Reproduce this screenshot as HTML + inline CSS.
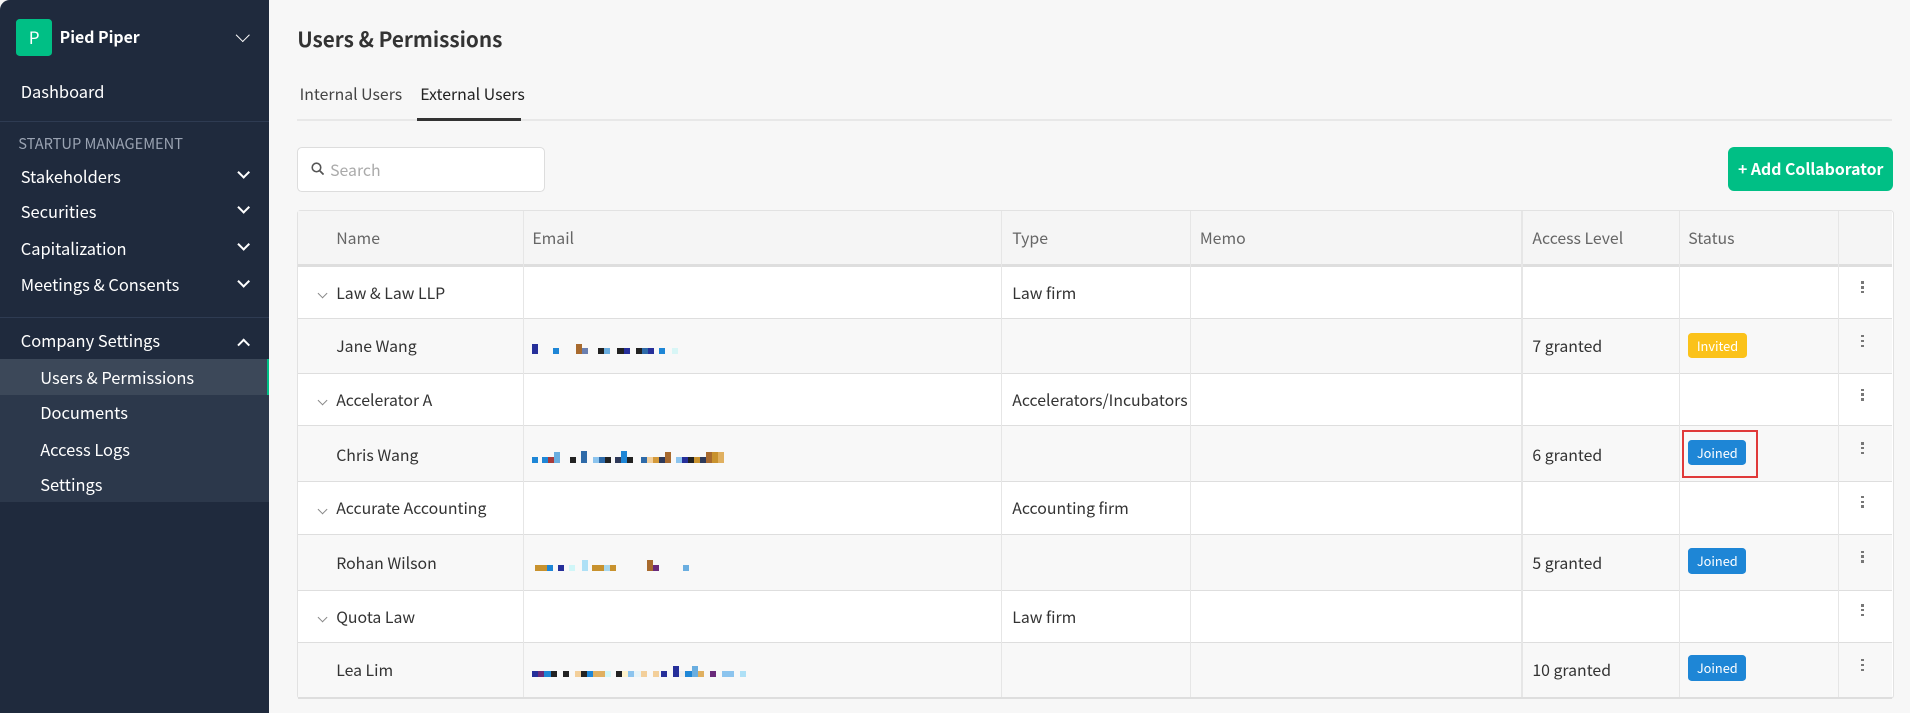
<!DOCTYPE html>
<html><head><meta charset="utf-8"><style>
html,body{margin:0;padding:0;width:1910px;height:713px;overflow:hidden;background:#f7f7f7}
#w{zoom:1.21811;width:1568px;height:585px;position:relative;font-family:"Noto Sans CJK KR","Liberation Sans",sans-serif;line-height:16px;background:#f7f7f7;color:#333}
.sb{position:absolute;left:0;top:0;width:221px;height:585px;background:#1f2a3d;color:#fff;border-top-left-radius:8px}
.a{position:absolute;white-space:nowrap}
.sb .i{position:absolute;left:17px;font-size:13.5px;color:#fff}
.chev{position:absolute;left:196px;width:6px;height:6px;border-right:2px solid #fff;border-bottom:2px solid #fff;transform:rotate(45deg)}
.t{position:absolute;font-size:13px;white-space:nowrap}
.vl{position:absolute;top:173px;height:399px;width:1px;background:#e6e6e6}
.hl{position:absolute;left:245px;width:1308px;height:1px;background:#dedede}
.b{position:absolute;left:1386px;height:21px;border-radius:3px;color:#fff;font-size:10.5px;line-height:21px;padding:0 7px}
.k{position:absolute;left:1528px;width:2px}
.k i{display:block;width:2px;height:2px;background:#777;margin-bottom:2px}
.em{position:absolute;left:437px;height:10px;display:flex;align-items:flex-end;line-height:0}
.em i{display:block;width:5px;height:5px;flex:none}
.rc{position:absolute;left:262px;width:5px;height:5px;border-right:1px solid #888;border-bottom:1px solid #888;transform:rotate(45deg)}
</style></head><body><div id="w">
<div class="sb">
 <div class="a" style="left:13px;top:16px;width:30px;height:30px;background:#00bf85;border-radius:3px;text-align:center;line-height:30px;font-size:14px">P</div>
 <div class="a" style="left:49px;top:22px;font-size:13px;font-weight:bold">Pied Piper</div>
 <div class="a" style="left:195px;top:25px;width:7px;height:7px;border-right:1.5px solid #fff;border-bottom:1.5px solid #fff;transform:rotate(45deg)"></div>
 <div class="i" style="top:67px">Dashboard</div>
 <div class="a" style="left:0;top:99px;width:221px;height:1px;background:#2e3b52"></div>
 <div class="a" style="left:15px;top:110px;font-size:12px;color:#9aa3b2">STARTUP MANAGEMENT</div>
 <div class="i" style="top:137px">Stakeholders</div><div class="chev" style="top:138px"></div>
 <div class="i" style="top:166px">Securities</div><div class="chev" style="top:167px"></div>
 <div class="i" style="top:196px">Capitalization</div><div class="chev" style="top:197px"></div>
 <div class="i" style="top:226px">Meetings &amp; Consents</div><div class="chev" style="top:227px"></div>
 <div class="a" style="left:0;top:260px;width:221px;height:1px;background:#2e3b52"></div>
 <div class="i" style="top:272px">Company Settings</div><div class="chev" style="top:279px;transform:rotate(-135deg)"></div>
 <div class="a" style="left:0;top:295px;width:221px;height:117px;background:#2c384b"></div>
 <div class="a" style="left:0;top:295px;width:219px;height:29px;background:#3c4859;border-right:2px solid #00bf85"></div>
 <div class="i" style="left:33px;top:302px">Users &amp; Permissions</div>
 <div class="i" style="left:33px;top:331px">Documents</div>
 <div class="i" style="left:33px;top:361px">Access Logs</div>
 <div class="i" style="left:33px;top:390px">Settings</div>
</div>
<div class="a" style="left:244px;top:24px;font-size:17px;font-weight:bold;color:#333">Users &amp; Permissions</div>
<div class="t" style="left:246px;top:69px;color:#444">Internal Users</div>
<div class="t" style="left:345px;top:69px;color:#222">External Users</div>
<div class="a" style="left:244px;top:98px;width:1309px;height:1px;background:#e8e8e8"></div>
<div class="a" style="left:342px;top:97px;width:86px;height:2px;background:#333"></div>
<div class="a" style="left:244px;top:121px;width:202px;height:35px;background:#fff;border:1px solid #ddd;border-radius:4px"></div>
<svg class="a" style="left:255px;top:133px" width="11" height="11" viewBox="0 0 11 11"><circle cx="4.5" cy="4.5" r="3.5" fill="none" stroke="#555" stroke-width="1.3"/><path d="M7 7l3.3 3.3" stroke="#555" stroke-width="1.4"/></svg>
<div class="t" style="left:271px;top:131px;color:#aaa">Search</div>
<div class="a" style="left:1419px;top:121px;width:135px;height:36px;background:#00bf85;border-radius:5px;color:#fff;font-size:13px;font-weight:bold;line-height:36px;text-align:center">+ Add Collaborator</div>
<div class="a" style="left:244px;top:172px;width:1309px;height:400px;border:1px solid #e2e2e2;background:#fff;border-radius:3px"></div>
<div class="a" style="left:245px;top:173px;width:1308px;height:45px;background:#f5f5f5"></div>
<div class="a" style="left:245px;top:261px;width:1308px;height:45px;background:#f8f8f8"></div>
<div class="a" style="left:245px;top:349px;width:1308px;height:46px;background:#f8f8f8"></div>
<div class="a" style="left:245px;top:438px;width:1308px;height:46px;background:#f8f8f8"></div>
<div class="a" style="left:245px;top:527px;width:1308px;height:45px;background:#f8f8f8"></div>
<div class="hl" style="top:217px;height:2px"></div><div class="hl" style="top:261px"></div><div class="hl" style="top:306px"></div><div class="hl" style="top:349px"></div><div class="hl" style="top:395px"></div><div class="hl" style="top:438px"></div><div class="hl" style="top:484px"></div><div class="hl" style="top:527px"></div><div class="hl" style="top:572px;height:2px"></div>
<div class="vl" style="left:429px"></div><div class="vl" style="left:822px"></div><div class="vl" style="left:977px"></div><div class="vl" style="left:1249px"></div><div class="vl" style="left:1378px"></div><div class="vl" style="left:1509px"></div>
<div class="t" style="left:276px;top:187px;color:#666">Name</div><div class="t" style="left:437px;top:187px;color:#666">Email</div><div class="t" style="left:831px;top:187px;color:#666">Type</div><div class="t" style="left:985px;top:187px;color:#666">Memo</div><div class="t" style="left:1258px;top:187px;color:#666">Access Level</div><div class="t" style="left:1386px;top:187px;color:#666">Status</div>
<div class="rc" style="top:238px"></div><div class="t" style="left:276px;top:232px">Law &amp; Law LLP</div><div class="t" style="left:831px;top:232px">Law firm</div>
<div class="t" style="left:276px;top:276px">Jane Wang</div><div class="t" style="left:1258px;top:276px">7 granted</div><div class="b" style="top:273px;background:#fbc21a">Invited</div>
<div class="rc" style="top:326px"></div><div class="t" style="left:276px;top:320px">Accelerator A</div><div class="t" style="left:831px;top:320px">Accelerators/Incubators</div>
<div class="t" style="left:276px;top:365px">Chris Wang</div><div class="t" style="left:1258px;top:365px">6 granted</div><div class="b" style="top:361px;background:#1e86d6">Joined</div>
<div class="a" style="left:1381px;top:353px;width:59px;height:36px;border:2px solid #e03a3a"></div>
<div class="rc" style="top:415px"></div><div class="t" style="left:276px;top:409px">Accurate Accounting</div><div class="t" style="left:831px;top:409px">Accounting firm</div>
<div class="t" style="left:276px;top:454px">Rohan Wilson</div><div class="t" style="left:1258px;top:454px">5 granted</div><div class="b" style="top:450px;background:#1e86d6">Joined</div>
<div class="rc" style="top:504px"></div><div class="t" style="left:276px;top:498px">Quota Law</div><div class="t" style="left:831px;top:498px">Law firm</div>
<div class="t" style="left:276px;top:542px">Lea Lim</div><div class="t" style="left:1258px;top:542px">10 granted</div><div class="b" style="top:538px;background:#1e86d6">Joined</div>
<div class="em" style="top:281px"><i style="background:#262f9a;height:9px"></i><i style="width:12px"></i><i style="background:#1e86d6"></i><i style="width:14px"></i><i style="background:#a86a2e;height:9px"></i><i style="background:#6a7fb0"></i><i style="width:8px"></i><i style="background:#222"></i><i style="background:#6aaee0"></i><i style="width:6px"></i><i style="background:#222"></i><i style="background:#262f9a"></i><i style="width:5px"></i><i style="background:#222"></i><i style="background:#2e6aa8"></i><i style="background:#262f9a"></i><i style="width:4px"></i><i style="background:#1e86d6"></i><i style="width:6px"></i><i style="background:#d8f6f6"></i></div>
<div class="em" style="top:370px"><i style="background:#1e86d6"></i><i style="width:3px"></i><i style="background:#1e86d6"></i><i style="background:#a83a3a"></i><i style="background:#6aaee0;height:9px"></i><i style="width:8px"></i><i style="background:#222"></i><i style="width:4px"></i><i style="background:#2e6aa8;height:10px"></i><i style="width:5px"></i><i style="background:#8cc4ee"></i><i style="background:#2e6aa8"></i><i style="background:#222"></i><i style="width:3px"></i><i style="background:#2e3a5a"></i><i style="background:#1e86d6;height:10px"></i><i style="background:#222"></i><i style="width:6px"></i><i style="background:#2e6aa8"></i><i style="background:#f3cf9a"></i><i style="background:#d49a3a"></i><i style="background:#2e3a5a"></i><i style="background:#a86a2e;height:9px"></i><i style="width:4px"></i><i style="background:#8cc4ee"></i><i style="background:#262f9a"></i><i style="background:#222"></i><i style="background:#c8922e"></i><i style="background:#2e3a5a"></i><i style="background:#a86a2e;height:9px"></i><i style="background:#c8922e;height:9px"></i><i style="background:#e0b060;height:9px"></i></div>
<div class="em" style="top:459px"><i style="width:2px"></i><i style="background:#c8922e;width:10px"></i><i style="background:#1e86d6"></i><i style="width:4px"></i><i style="background:#262f9a"></i><i style="width:4px"></i><i style="background:#d0f6f8"></i><i style="width:6px"></i><i style="background:#aee0f6;height:9px"></i><i style="width:3px"></i><i style="background:#c8922e;width:10px"></i><i style="background:#a8d8ee"></i><i style="background:#c8922e"></i><i style="width:25px"></i><i style="background:#a86a2e;height:9px"></i><i style="background:#6a2a7a"></i><i style="width:20px"></i><i style="background:#6aaee0"></i></div>
<div class="em" style="top:546px"><i style="background:#262f9a"></i><i style="background:#6a2a7a"></i><i style="background:#1e86d6"></i><i style="background:#222"></i><i style="width:5px"></i><i style="background:#222"></i><i style="width:5px"></i><i style="background:#f3cf9a"></i><i style="background:#222"></i><i style="background:#1e86d6"></i><i style="background:#e0b060;width:10px"></i><i style="background:#d0f6f8"></i><i style="width:4px"></i><i style="background:#222"></i><i style="background:#fff3cc"></i><i style="background:#8cc4ee"></i><i style="background:#e8f4f8"></i><i style="background:#f3cf9a"></i><i style="width:5px"></i><i style="background:#f3cf9a"></i><i style="width:2px"></i><i style="background:#262f9a"></i><i style="width:5px"></i><i style="background:#262f9a;height:9px"></i><i style="background:#eee"></i><i style="background:#1e86d6"></i><i style="background:#6aaee0;height:9px"></i><i style="background:#e0b060"></i><i style="width:5px"></i><i style="background:#6a2a7a"></i><i style="width:5px"></i><i style="background:#8cc4ee;width:10px"></i><i style="width:5px"></i><i style="background:#aee0f6"></i></div>
<div class="k" style="top:231px"><i></i><i></i><i></i></div><div class="k" style="top:275px"><i></i><i></i><i></i></div><div class="k" style="top:319px"><i></i><i></i><i></i></div><div class="k" style="top:363px"><i></i><i></i><i></i></div><div class="k" style="top:407px"><i></i><i></i><i></i></div><div class="k" style="top:452px"><i></i><i></i><i></i></div><div class="k" style="top:496px"><i></i><i></i><i></i></div><div class="k" style="top:541px"><i></i><i></i><i></i></div>
</div></body></html>
